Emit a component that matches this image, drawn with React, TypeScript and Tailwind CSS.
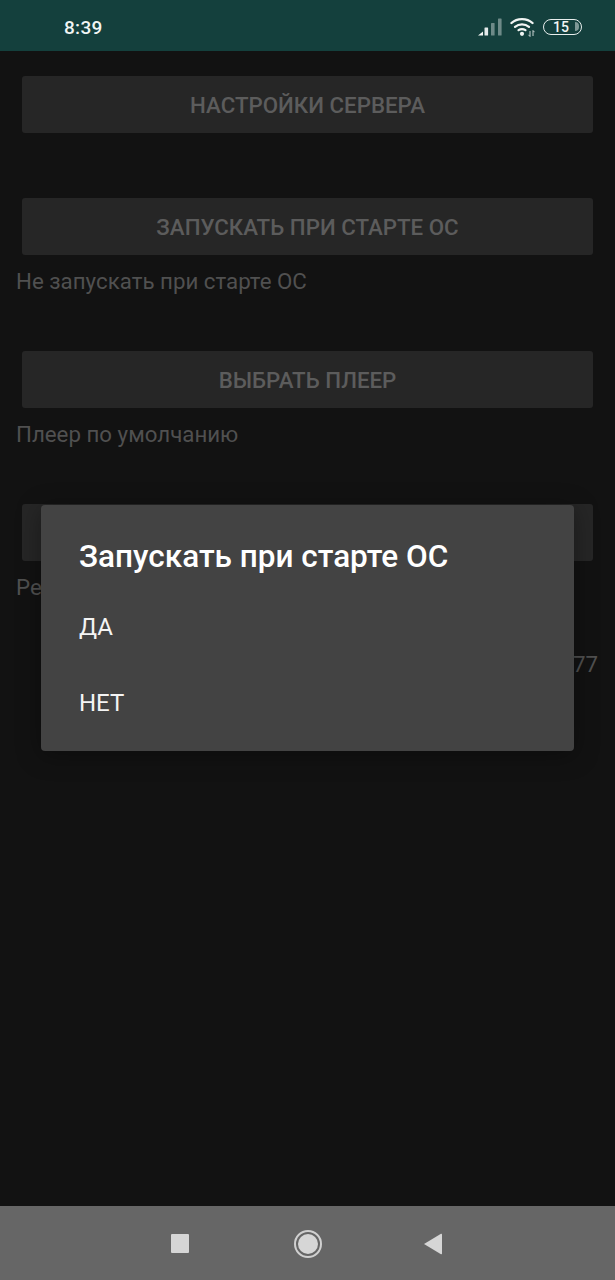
import * as React from 'react';

function SignalIcon() {
  return (
    <svg width="24" height="18" viewBox="0 0 24 18" className="block">
      <path d="M0 17.5 L5 13.5 V17.5 Z" fill="#f2f5f4" />
      <rect x="6.5" y="9.5" width="3.6" height="8" rx="0.6" fill="#e4eaea" />
      <rect x="13" y="5" width="3.6" height="12.5" rx="0.6" fill="#6e8a88" />
      <rect x="20" y="0.5" width="3.6" height="17" rx="0.6" fill="#6e8a88" />
    </svg>
  );
}

function WifiIcon() {
  return (
    <svg width="25" height="20" viewBox="0 0 25 20" fill="none" className="block">
      <path d="M1.5 6 C7 0.8 17 0.8 22.5 6" stroke="#f2f5f4" strokeWidth="2.4" strokeLinecap="round" />
      <path d="M5 9.8 C9 6.6 15 6.6 19 9.8" stroke="#f2f5f4" strokeWidth="2.3" strokeLinecap="round" />
      <path d="M8.5 13.2 C10.7 11.7 13.3 11.7 15.5 13.2" stroke="#f2f5f4" strokeWidth="2.2" strokeLinecap="round" />
      <circle cx="12" cy="16.8" r="2.1" fill="#f2f5f4" />
      <path d="M20 14 V19.5 M18.5 17.8 L20 19.5 M23 13.5 V19 M23 13.5 L24.5 15.2" stroke="#c9d4d3" strokeWidth="1" />
    </svg>
  );
}

function BatteryIcon() {
  return (
    <div className="relative flex h-[16px] w-[39px] items-center justify-center rounded-full border-[1.5px] border-[#e8eeed]">
      <span className="pr-[3px] font-['Roboto',sans-serif] text-[14px] leading-none font-medium text-[#f2f5f4]">15</span>
      <span className="absolute top-[2px] right-[2px] h-[9px] w-[4px] rounded-r-full bg-[#7f9896]" />
    </div>
  );
}

function StatusBar() {
  return (
    <div className="flex h-[51px] shrink-0 items-center justify-between bg-[#14403d] pt-[3px] pr-[33px] pl-[64px]">
      <span className="font-['Roboto',sans-serif] text-[19px] leading-none font-medium tracking-[0.3px] text-[#f1f5f4]">8:39</span>
      <div className="flex items-center gap-[8px]">
        <SignalIcon />
        <WifiIcon />
        <BatteryIcon />
      </div>
    </div>
  );
}

function DimButton({ label }: { label?: string }) {
  return (
    <div className="mx-[22px] flex h-[57px] items-center justify-center rounded-[3px] bg-[#262626] pt-[2px] text-[22.3px] leading-none font-medium text-[#5c5c5c]">
      {label}
    </div>
  );
}

function Caption({ text }: { text: string }) {
  return <p className="mt-[14px] h-[25px] pl-[16px] text-[22.3px] leading-[25px] text-[#505050]">{text}</p>;
}

function Dialog() {
  return (
    <div className="absolute top-[505px] left-[41px] h-[246px] w-[533px] rounded-[4px] bg-[#434343] pt-[33px] pl-[38px] shadow-[0_4px_24px_rgba(0,0,0,0.35)]">
      <h2 className="text-[31.5px] leading-[38px] font-medium text-white">Запускать при старте ОС</h2>
      <p className="mt-[35px] text-[24px] leading-[32px] text-[#f4f4f4]">ДА</p>
      <p className="mt-[44px] text-[24px] leading-[32px] text-[#f4f4f4]">НЕТ</p>
    </div>
  );
}

function NavBar() {
  return (
    <div className="relative flex h-[74px] shrink-0 items-center bg-[#666666]">
      <div className="absolute top-[28px] left-[171px] h-[19px] w-[18px] rounded-[1px] bg-[#d6d6d6]" />
      <div className="absolute top-[24px] left-[294px] flex h-[28px] w-[28px] items-center justify-center rounded-full border-[2px] border-[#d0d0d0]">
        <div className="h-[20px] w-[20px] rounded-full bg-[#d6d6d6]" />
      </div>
      <svg width="20" height="22" viewBox="0 0 20 22" className="absolute top-[27px] left-[423px]">
        <path d="M1 11 L18 0.8 C18.7 0.5 19 1 19 1.6 V20.4 C19 21 18.7 21.5 18 21.2 Z" fill="#d6d6d6" />
      </svg>
    </div>
  );
}

export default function App() {
  return (
    <div className="relative flex h-[1280px] w-[615px] flex-col overflow-hidden bg-[#121212] font-['Roboto',sans-serif]">
      <StatusBar />
      <div className="flex-1 pt-[25px]">
        <DimButton label="НАСТРОЙКИ СЕРВЕРА" />
        <div className="mt-[65px]">
          <DimButton label="ЗАПУСКАТЬ ПРИ СТАРТЕ ОС" />
          <Caption text="Не запускать при старте ОС" />
        </div>
        <div className="mt-[57px]">
          <DimButton label="ВЫБРАТЬ ПЛЕЕР" />
          <Caption text="Плеер по умолчанию" />
        </div>
        <div className="mt-[57px]">
          <DimButton />
          <Caption text="Ре" />
        </div>
        <p className="mt-[52px] pr-[17px] text-right text-[22.3px] leading-[25px] text-[#505050]">77</p>
      </div>
      <NavBar />
      <Dialog />
    </div>
  );
}
